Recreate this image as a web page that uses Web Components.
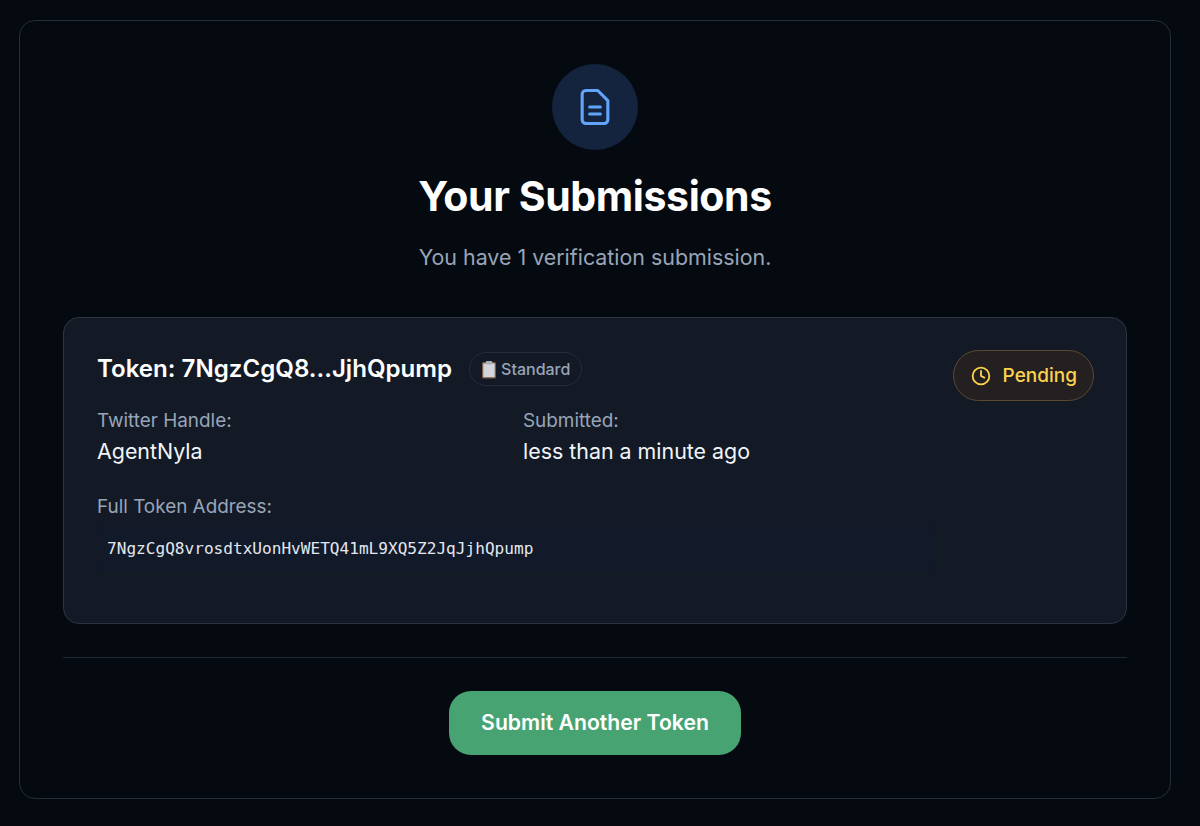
<!DOCTYPE html>
<html lang="en">
<head>
<meta charset="utf-8">
<title>Your Submissions</title>
<style>
    html, body { margin: 0; height: 100%; background: #040a0f; }
    body {
        box-sizing: border-box;
        padding: 20px 29px 27px 19px;
        font-family: Inter, "Liberation Sans", sans-serif;
        color: #fff;
    }
</style>
</head>
<body>
<submissions-panel>
    <submission-card
        token="Token: 7NgzCgQ8...JjhQpump"
        tier="Standard"
        status="Pending"
        handle="AgentNyla"
        submitted="less than a minute ago"
        address="7NgzCgQ8vrosdtxUonHvWETQ41mL9XQ5Z2JqJjhQpump"></submission-card>
</submissions-panel>

<script>
class SubmissionsPanel extends HTMLElement {
    constructor() {
        super();
        this.attachShadow({ mode: 'open' });
        this.shadowRoot.innerHTML = `
            <style>
                :host {
                    display: block;
                    box-sizing: border-box;
                    height: 779px;
                    padding: 43px 43px 0;
                    background: #040a0f;
                    border: 1px solid #262e39;
                    border-radius: 16px;
                }
                .head {
                    display: flex;
                    flex-direction: column;
                    align-items: center;
                }
                .icon {
                    width: 86px;
                    height: 86px;
                    border-radius: 50%;
                    background: #14243f;
                    display: flex;
                    justify-content: center;
                    align-items: center;
                }
                h1 {
                    margin: 23px 0 0;
                    font-size: 41px;
                    line-height: 47px;
                    font-weight: 700;
                    letter-spacing: -0.4px;
                    color: #fff;
                }
                p {
                    margin: 23px 0 0;
                    font-size: 21.4px;
                    line-height: 28px;
                    color: #98a5b9;
                }
                .body { margin-top: 46px; }
                hr {
                    margin: 33px 0 0;
                    border: 0;
                    height: 1px;
                    background: #212935;
                }
                .actions {
                    display: flex;
                    justify-content: center;
                    margin-top: 33px;
                }
                button {
                    width: 292px;
                    height: 64px;
                    padding: 0 0 2px;
                    border: 0;
                    border-radius: 22px;
                    background: #48a373;
                    color: #fff;
                    font: 600 21.2px Inter, "Liberation Sans", sans-serif;
                    cursor: pointer;
                }
            </style>
            <div class="head">
                <div class="icon">
                    <svg width="44" height="44" viewBox="0 0 24 24" fill="none" stroke="#60a5fa" stroke-width="1.7" stroke-linecap="round" stroke-linejoin="round">
                        <path d="M7 3h6.5L19 8.5V19a2 2 0 0 1-2 2H7a2 2 0 0 1-2-2V5a2 2 0 0 1 2-2z"/>
                        <path d="M9.1 12h5.8M9.1 15.8h5.8"/>
                    </svg>
                </div>
                <h1>Your Submissions</h1>
                <p>You have 1 verification submission.</p>
            </div>
            <div class="body"><slot></slot></div>
            <hr>
            <div class="actions"><button>Submit Another Token</button></div>
        `;
    }
}

class SubmissionCard extends HTMLElement {
    constructor() {
        super();
        this.attachShadow({ mode: 'open' });
    }

    connectedCallback() {
        const get = name => this.getAttribute(name);
        this.shadowRoot.innerHTML = `
            <style>
                :host {
                    display: block;
                    box-sizing: border-box;
                    height: 307px;
                    padding: 32px 32px 32px 33px;
                    background: #131a26;
                    border: 1px solid #2c3544;
                    border-radius: 16px;
                }
                .top {
                    display: flex;
                    justify-content: space-between;
                    align-items: flex-start;
                }
                .main { flex: 1; min-width: 0; }
                .title {
                    display: flex;
                    align-items: center;
                    gap: 17px;
                    height: 38px;
                }
                h3 {
                    margin: 0;
                    font-size: 24.1px;
                    line-height: 30px;
                    font-weight: 600;
                    color: #fff;
                }
                .tier {
                    display: inline-flex;
                    align-items: center;
                    gap: 4px;
                    box-sizing: border-box;
                    height: 34px;
                    padding: 0 11px;
                    border: 1px solid #252d3a;
                    border-radius: 17px;
                    font-size: 16px;
                    font-weight: 500;
                    color: #98a5b9;
                }
                .status {
                    display: inline-flex;
                    align-items: center;
                    gap: 12px;
                    box-sizing: border-box;
                    height: 51px;
                    padding: 0 16px 0 17px;
                    border: 1px solid #5c4a30;
                    border-radius: 26px;
                    background: #241f20;
                    color: #fcd34d;
                    font-size: 19px;
                    font-weight: 500;
                }
                .fields {
                    display: grid;
                    grid-template-columns: 426px 1fr;
                    margin-top: 20px;
                }
                .label {
                    font-size: 18.9px;
                    line-height: 26px;
                    color: #98a5b9;
                }
                .value {
                    margin-top: 2px;
                    font-size: 21.4px;
                    line-height: 30px;
                    color: #f1f5f9;
                }
                .address { margin-top: 28px; }
                code {
                    display: block;
                    box-sizing: border-box;
                    width: 836px;
                    height: 46px;
                    margin-top: 6px;
                    padding: 0 10px;
                    background: #121928;
                    border-radius: 6px;
                    font-family: "DejaVu Sans Mono", monospace;
                    font-size: 16.1px;
                    line-height: 46px;
                    color: #e2e8f0;
                }
            </style>
            <div class="top">
                <div class="main">
                    <div class="title">
                        <h3>${get('token')}</h3>
                        <span class="tier">
                            <svg width="16" height="19" viewBox="0 0 16 19">
                                <rect x="1" y="2" width="14" height="16.5" rx="1.5" fill="#7d5f42"/>
                                <rect x="2.3" y="3.4" width="11.4" height="13.8" fill="#d3d7dc"/>
                                <rect x="4.8" y="1" width="6.4" height="3.4" rx="1" fill="#a9b0b8"/>
                            </svg>
                            ${get('tier')}
                        </span>
                    </div>
                    <div class="fields">
                        <div>
                            <div class="label">Twitter Handle:</div>
                            <div class="value">${get('handle')}</div>
                        </div>
                        <div>
                            <div class="label">Submitted:</div>
                            <div class="value">${get('submitted')}</div>
                        </div>
                    </div>
                </div>
                <span class="status">
                    <svg width="20" height="20" viewBox="0 0 24 24" fill="none" stroke="currentColor" stroke-width="2.2" stroke-linecap="round" stroke-linejoin="round">
                        <circle cx="12" cy="12" r="10"/>
                        <path d="M12 6v6l4 2"/>
                    </svg>
                    ${get('status')}
                </span>
            </div>
            <div class="address">
                <div class="label">Full Token Address:</div>
                <code>${get('address')}</code>
            </div>
        `;
    }
}

customElements.define('submissions-panel', SubmissionsPanel);
customElements.define('submission-card', SubmissionCard);
</script>
</body>
</html>
